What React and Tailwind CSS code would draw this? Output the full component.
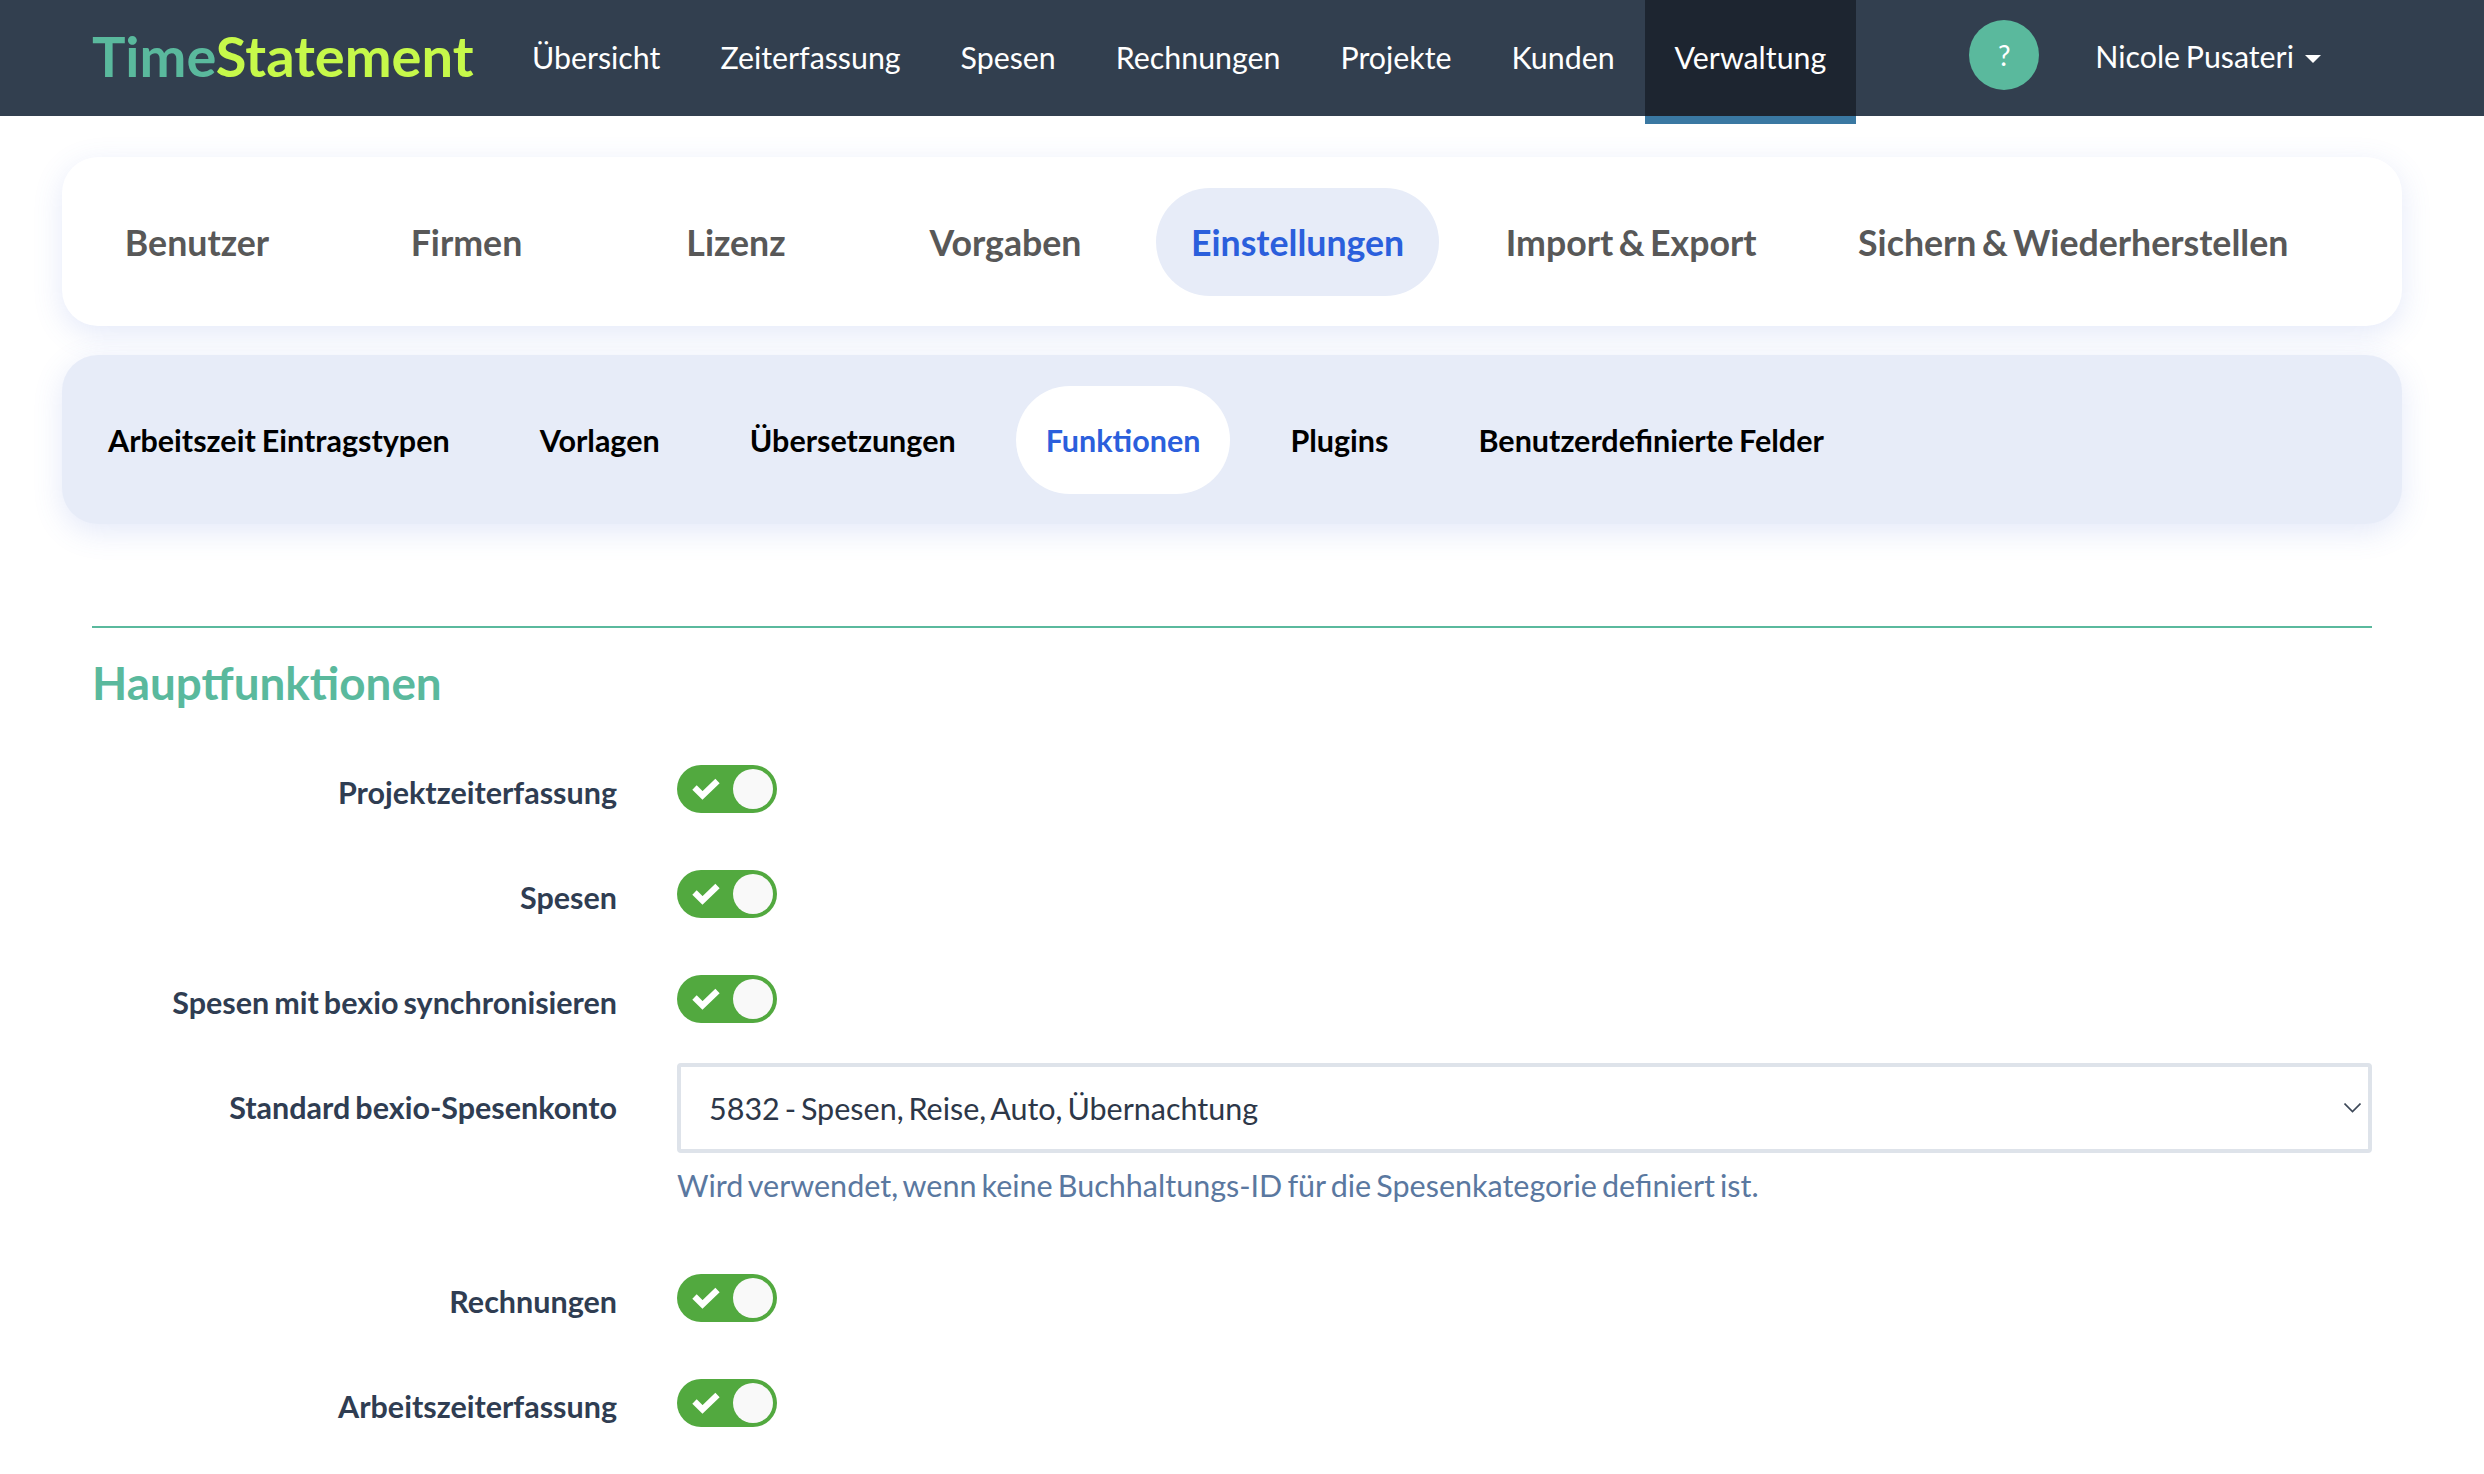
import React from 'react';

const navItems = ['Übersicht', 'Zeiterfassung', 'Spesen', 'Rechnungen', 'Projekte', 'Kunden'];
const mainTabs = ['Benutzer', 'Firmen', 'Lizenz', 'Vorgaben', 'Einstellungen', 'Import & Export', 'Sichern & Wiederherstellen'];
const subTabs = ['Arbeitszeit Eintragstypen', 'Vorlagen', 'Übersetzungen', 'Funktionen', 'Plugins', 'Benutzerdefinierte Felder'];

const Toggle = () => (
  <div className="w-[100px] h-[48px] rounded-full bg-[#52a93f] flex items-center justify-between pl-[15px] pr-[4px]">
    <svg width="28" height="24" viewBox="0 0 28 24" fill="none" stroke="#fff" strokeWidth="6.2">
      <path d="M2.5 10.5 L10.5 18.5 L25.5 4" />
    </svg>
    <div className="w-[40px] h-[40px] rounded-full bg-[#f9f9f9]" />
  </div>
);

const ToggleRow = ({ label, className }) => (
  <div className={`flex items-start gap-[60px] ${className}`}>
    <label className="w-[525px] h-[48px] pt-[3px] leading-[48px] text-right text-[30.5px] [word-spacing:-2.4px] font-bold text-[#2f3d52]">{label}</label>
    <Toggle />
  </div>
);

export default function App() {
  return (
    <div className="h-[1474px] overflow-hidden bg-white font-['Lato',sans-serif]">
      {/* top navigation */}
      <nav className="h-[116px] bg-[#323f4f] flex items-start pl-[92px] text-[30.33px] [word-spacing:-2px] text-white">
        <a className="w-[410px] leading-[112px] text-[56px] font-bold">
          <span className="text-[#5ab99d]">Time</span>
          <span className="text-[#c6f94a]">Statement</span>
        </a>
        {navItems.map((item) => (
          <a key={item} className="px-[30px] leading-[114px]">{item}</a>
        ))}
        <a className="h-[124px] px-[30px] leading-[114px] bg-[#1d2530] border-b-8 border-[#3a78a2]">Verwaltung</a>
        <div className="w-[70px] h-[70px] mt-[20px] ml-[113px] rounded-full bg-[#5ab99d] flex items-center justify-center text-[28px]">?</div>
        <a className="ml-[56px] flex items-center h-[114px]">
          Nicole Pusateri
          <span className="ml-[11px] mt-[4px] border-x-[8px] border-x-transparent border-t-[8px] border-t-white" />
        </a>
      </nav>

      {/* main tabs */}
      <div className="ml-[62px] mr-[82px] mt-[41px] h-[169px] rounded-[36px] bg-white shadow-[0_8px_30px_rgba(90,120,220,0.16)] flex items-center gap-[31.5px] px-[16px]">
        {mainTabs.map((tab) => (
          <a
            key={tab}
            className={`min-w-[238px] h-[108px] px-[35px] pt-[2px] rounded-full flex items-center justify-center whitespace-nowrap text-[35.7px] [word-spacing:-3.2px] font-bold ${
              tab === 'Einstellungen' ? 'bg-[#e7ecf8] text-[#2b5fdc]' : 'text-[#585858]'
            }`}
          >
            {tab}
          </a>
        ))}
      </div>

      {/* sub tabs */}
      <div className="ml-[62px] mr-[82px] mt-[29px] h-[169px] rounded-[36px] bg-[#e7ecf8] shadow-[0_8px_30px_rgba(90,120,220,0.16)] flex items-center gap-[30px] px-[16px]">
        {subTabs.map((tab) => (
          <a
            key={tab}
            className={`h-[108px] px-[30px] pt-[2px] rounded-full flex items-center whitespace-nowrap text-[30.5px] [word-spacing:-1.5px] font-bold ${
              tab === 'Funktionen' ? 'bg-white text-[#2b5fdc]' : 'text-black'
            }`}
          >
            {tab}
          </a>
        ))}
      </div>

      {/* settings form */}
      <div className="ml-[92px] mr-[112px] mt-[102px]">
        <div className="border-t-[2px] border-[#5ab99d]" />
        <h2 className="mt-[26px] mb-[53px] h-[58px] leading-[58px] text-[45.8px] font-bold text-[#5ab99d]">Hauptfunktionen</h2>

        <ToggleRow label="Projektzeiterfassung" className="mb-[57px]" />
        <ToggleRow label="Spesen" className="mb-[57px]" />
        <ToggleRow label="Spesen mit bexio synchronisieren" className="mb-[40px]" />

        <div className="flex items-start gap-[60px] mb-[69px]">
          <label className="w-[525px] leading-[48px] pt-[20px] text-right text-[30.5px] [word-spacing:-2.4px] font-bold text-[#2f3d52]">Standard bexio-Spesenkonto</label>
          <div className="flex-1">
            <div className="h-[90px] border-4 border-[#dee3ea] rounded-[4px] flex items-center justify-between pl-[28px] pr-[7px] text-[30.5px] [word-spacing:-2.9px] text-[#2d3748]">
              <span className="pt-[2px]">5832 - Spesen, Reise, Auto, Übernachtung</span>
              <svg width="17" height="10" viewBox="0 0 17 10" fill="none" stroke="#3d4858" strokeWidth="1.6">
                <path d="M0.5 0.5 L8.5 8.5 L16.5 0.5" />
              </svg>
            </div>
            <p className="mt-[12px] leading-[40px] text-[30.5px] [word-spacing:-2.7px] text-[#5a78a0]">Wird verwendet, wenn keine Buchhaltungs-ID für die Spesenkategorie definiert ist.</p>
          </div>
        </div>

        <ToggleRow label="Rechnungen" className="mb-[57px]" />
        <ToggleRow label="Arbeitszeiterfassung" />
      </div>
    </div>
  );
}
